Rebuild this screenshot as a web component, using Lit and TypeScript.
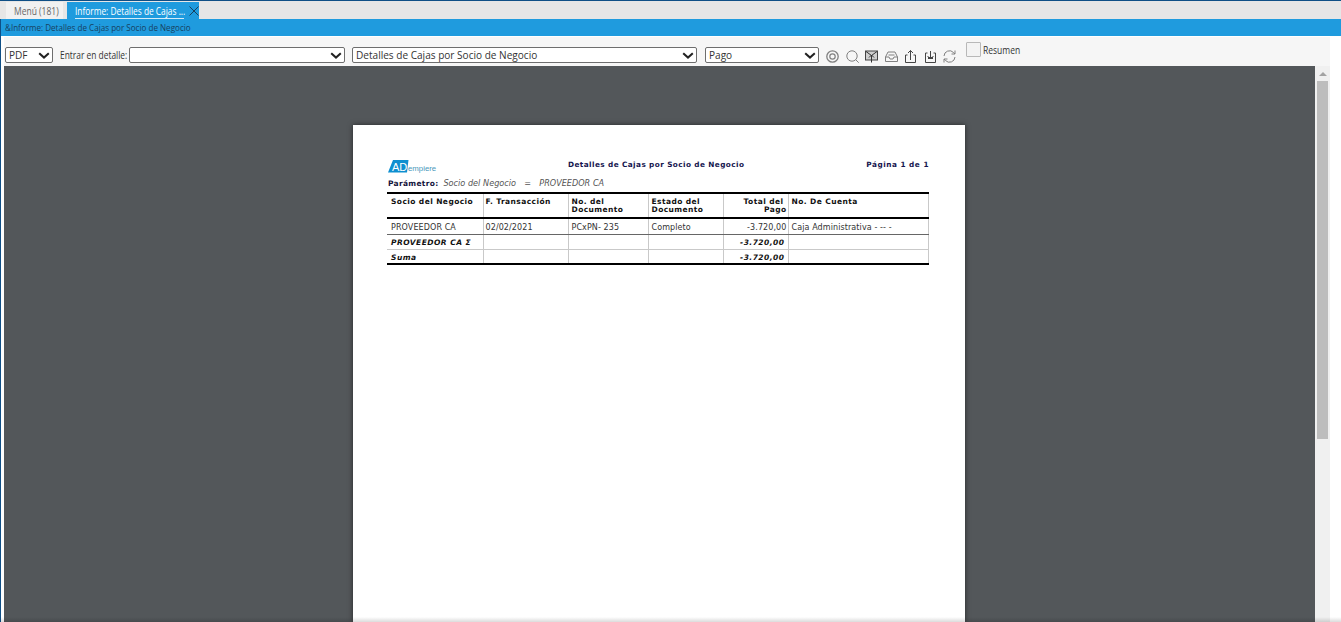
import { LitElement, html, css, svg } from "lit";
import { customElement } from "lit/decorators.js";

const chev = html`<svg class="chev" width="12" height="7" viewBox="0 0 12 7"><path d="M1.2 1.2 6 5.6l4.8-4.4" fill="none" stroke="#222" stroke-width="2"/></svg>`;

@customElement("app-root")
export class AppRoot extends LitElement {
  static styles = css`
    :host { display: block; width: 1341px; height: 622px; overflow: hidden; position: relative; background: #fff; font-family: "Open Sans", sans-serif; color: #333; }
    .app { height: 622px; display: flex; flex-direction: column; border-left: 1px solid #0f4f86; box-sizing: border-box; }
    .c { display: inline-block; white-space: nowrap; transform: scaleX(.85); transform-origin: left center; }
    .tabs { height: 19px; flex: none; background: #e6e6e6; border-top: 1px solid #0f4f86; box-sizing: border-box; display: flex; align-items: flex-end; padding-left: 5px; margin-left: -1px; }
    .tab { height: 17px; display: flex; align-items: center; font-size: 10px; box-sizing: border-box; position: relative; }
    .tab.menu { width: 57px; background: #f1f1f1; color: #666; padding-left: 8px; margin-left: 1px; margin-right: 4px; }
    .tab.on { width: 132px; background: #1f9bde; color: #fff; padding-left: 8px; }
    .tab.on .c { transform: scaleX(.835); }
    .tab.on .under { position: absolute; left: 8px; bottom: 0; width: 109px; height: 1px; background: #d5ecf8; }
    .tab.on svg { position: absolute; left: 122px; top: 4px; }
    .band { height: 17px; flex: none; background: #1f9bde; color: #17415f; font-size: 9.5px; display: flex; align-items: center; padding: 0 0 0 4px; box-sizing: border-box; }
    .toolbar { height: 30px; flex: none; background: #f6f6f6; border-top: 1px solid #fff; margin-left: 3px; margin-right: 11px; display: flex; position: relative; align-items: flex-start; padding: 10px 0 0 1px; box-sizing: border-box; font-size: 10px; color: #333; }
    .sel { height: 16px; box-sizing: border-box; border: 1px solid #6e6e6e; border-radius: 2px; background: #fff; display: flex; align-items: center; justify-content: space-between; padding: 0 2px 1px 3px; font-size: 11.500px; color: #333; flex: none; }
    .sel .c { transform: scaleX(.875); width: 10px; }
    .sel svg { margin-top: 1px; }
    .s1 { width: 48px; margin-right: 7px; }
    .s2 { width: 216px; margin-right: 7px; }
    .s3 { width: 345px; margin-right: 8px; }
    .s4 { width: 114px; margin-right: 6px; }
    .lbl { font-size: 10px; line-height: 16px; white-space: nowrap; width: 69px; flex: none; }
    .lbl .c { transform: scaleX(.84); }
    .icons { display: flex; gap: 4.500px; margin-top: 2px; }
    .icons svg { display: block; }
    .check { display: flex; position: absolute; left: 962px; top: 5px; gap: 2px; }
    .box { width: 15px; height: 15px; box-sizing: border-box; background: #f3f3f3; border: 1px solid #b8b8b8; border-radius: 1px; flex: none; }
    .check span { font-size: 10px; line-height: 14px; padding-top: 1px; }
    .main { flex: 1; min-height: 0; display: flex; }
    .gutter { width: 3px; flex: none; background: #fff; }
    .viewer { width: 1311px; flex: none; background: #53575a; padding: 59px 0 0 349px; box-sizing: border-box; display: flex; overflow: hidden; }
    .page { width: 612px; height: 497px; flex: none; background: #fff; box-shadow: 0 0 5px rgba(0,0,0,.55); padding: 34px 36px 0 34px; box-sizing: border-box; font-family: "DejaVu Sans", sans-serif; color: #000; }
    .sb { width: 15px; flex: none; background: #f0f0f0; position: relative; padding: 6px 2px 0; box-sizing: border-box; }
    .arrow { width: 0; height: 0; border-left: 4px solid transparent; border-right: 4px solid transparent; border-bottom: 4px solid #a3a3a3; margin: 0 auto 5px; }
    .thumb { height: 358px; background: #bdbdbd; width: 11px; }
    .right { flex: 1; background: #fff; }
    .bottom { position: absolute; left: 0; right: 0; bottom: 0; height: 5px; background: linear-gradient(rgba(0,0,0,0), rgba(0,0,0,.14)); }
    .head { display: flex; align-items: flex-start; height: 16px; padding-left: 1px; }
    .logo { display: block; flex: none; }
    .t { font-size: 7.300px; font-weight: bold; color: #14144e; letter-spacing: .52px; line-height: 10px; margin-top: 1px; }
    .title { letter-spacing: .42px; margin: 1px auto 0 130px; }
    .param { font-size: 8.100px; line-height: 10px; margin: 3px 0 0 1px; height: 14px; color: #555; font-style: italic; white-space: pre; word-spacing: .2px; }
    .param b { font-style: normal; font-size: 7.500px; color: #14143c; letter-spacing: .3px; margin-right: 5px; }
    table { border-collapse: collapse; table-layout: fixed; width: 541px; font-size: 8px; }
    th, td { border-left: 1px solid #c9c9c9; padding: 0 2px; overflow: hidden; white-space: nowrap; box-sizing: border-box; }
    tr > :first-child { border-left: none; padding-left: 4px; }
    tr > :nth-child(n+3) { padding-left: 3px; }
    tr > :last-child { border-right: 1px solid #c9c9c9; }
    th { text-align: left; vertical-align: top; font-size: 7.500px; font-weight: bold; letter-spacing: .42px; line-height: 8px; height: 25px; padding-top: 4px; border-top: 2px solid #000; border-bottom: 2px solid #000; white-space: normal; color: #111; }
    td { height: 15.500px; padding-top: 2px; color: #333; letter-spacing: .1px; }
    .r1 td { height: 16px; border-bottom: 1.500px solid #666; }
    .r2 td { height: 15px; border-bottom: 1px solid #c9c9c9; }
    .r3 td { height: 15px; border-bottom: 2px solid #000; }
    td.em { font-size: 7.500px; font-weight: bold; font-style: italic; letter-spacing: .48px; color: #111; }
    .num { text-align: right; padding-right: 1px; }
    .num.em { padding-right: 3px; }
  `;

  private ico(body: unknown) {
    return html`<svg width="15" height="15" viewBox="0 0 15 15" fill="none" stroke="#808080" stroke-width="1">${body}</svg>`;
  }

  render() {
    return html`<div class="app">
      <div class="tabs">
        <div class="tab menu"><span class="c">Menú (181)</span></div>
        <div class="tab on"><span class="c">Informe: Detalles de Cajas ...</span><i class="under"></i>
          <svg width="10" height="10" viewBox="0 0 10 10"><path d="M.5.5l9 9M9.500.5l-9 9" stroke="#17415f" stroke-width="1"/></svg>
        </div>
      </div>
      <div class="band"><span class="c">&amp;Informe: Detalles de Cajas por Socio de Negocio</span></div>
      <div class="toolbar">
        <div class="sel s1"><span class="c">PDF</span>${chev}</div>
        <div class="lbl"><span class="c">Entrar en detalle:</span></div>
        <div class="sel s2"><span></span>${chev}</div>
        <div class="sel s3"><span class="c">Detalles de Cajas por Socio de Negocio</span>${chev}</div>
        <div class="sel s4"><span class="c">Pago</span>${chev}</div>
        <div class="icons">
          ${this.ico(svg`<circle cx="7.5" cy="7.5" r="5.7" stroke-width="1.3"/><circle cx="7.5" cy="7.5" r="2.7" stroke-width="1.2"/>`)}
          ${this.ico(svg`<circle cx="7" cy="7" r="5.200"/><path d="M10.700 10.700l3 3"/>`)}
          ${this.ico(svg`<rect x="1.500" y="2" width="12" height="9" stroke="#444" fill="#cfcfcf"/><path d="M2 2.500l5.500 4 5.500-4M7.500 13.500V6M5 8.500l2.500-2.500L10 8.500" stroke="#333"/>`)}
          ${this.ico(svg`<path d="M1.500 8l2.500-5h7l2.500 5v4.500h-12zM1.500 8h3.500l1 2h3l1-2h3.500M4.500 6h6" />`)}
          ${this.ico(svg`<path d="M4.500 6H2.500v7.500h10V6h-2M7.500 11V1.500M5 4l2.500-2.500L10 4" stroke="#444"/>`)}
          ${this.ico(svg`<path d="M4.500 4H2.500v9.500h10V4h-2M7.500 2v8M4.500 7l3 3 3-3" stroke="#444" /><path d="M5 8h5v2H5z" fill="#444" stroke="none"/>`)}
          ${this.ico(svg`<path d="M2 7a5.500 5.500 0 0 1 9.500-3.500L13 5M13 8a5.500 5.500 0 0 1-9.500 3.500L2 10M13 1.500V5H9.500M2 13.500V10h3.500"/>`)}
        </div>
        <div class="check"><div class="box"></div><span class="c">Resumen</span></div>
      </div>
      <div class="main">
        <div class="gutter"></div>
        <div class="viewer">
          <div class="page">
            <div class="head">
              <svg class="logo" width="50" height="15" viewBox="0 0 50 15">
                <path d="M5 1H20.500L19 13.500H0z" fill="#0e8fd0"/>
                <text x="4" y="12" font-size="11" fill="#fff" font-family="Liberation Sans">AD</text>
                <text x="20" y="12" font-size="7.800" fill="#4a97bb" font-family="Liberation Sans">empiere</text>
              </svg>
              <div class="t title">Detalles de Cajas por Socio de Negocio</div>
              <div class="t">Página 1 de 1</div>
            </div>
            <div class="param"><b>Parámetro:</b>Socio del Negocio   =   PROVEEDOR CA</div>
            <table>
              <colgroup><col style="width:96px"><col style="width:85px"><col style="width:80px"><col style="width:75px"><col style="width:65px"><col style="width:140px"></colgroup>
              <tr><th>Socio del Negocio</th><th>F. Transacción</th><th>No. del<br>Documento</th><th>Estado del<br>Documento</th><th class="num">Total del&nbsp;<br>Pago</th><th>No. De Cuenta</th></tr>
              <tr class="r1"><td>PROVEEDOR CA</td><td>02/02/2021</td><td>PCxPN- 235</td><td>Completo</td><td class="num">-3.720,00</td><td>Caja Administrativa - -- -</td></tr>
              <tr class="r2"><td class="em">PROVEEDOR CA Σ</td><td></td><td></td><td></td><td class="num em">-3.720,00</td><td></td></tr>
              <tr class="r3"><td class="em">Suma</td><td></td><td></td><td></td><td class="num em">-3.720,00</td><td></td></tr>
            </table>
          </div>
        </div>
        <div class="sb"><div class="arrow"></div><div class="thumb"></div></div>
        <div class="right"></div>
      </div>
      <div class="bottom"></div>
    </div>`;
  }
}
